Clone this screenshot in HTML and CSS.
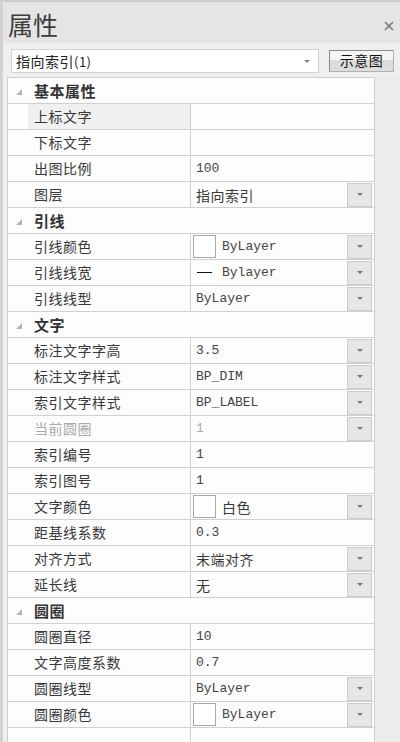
FILE: index.html
```html
<!DOCTYPE html>
<html lang="zh">
<head>
<meta charset="utf-8">
<title>属性</title>
<link rel="stylesheet" href="styles.css">
</head>
<body>
<div class="panel">
  <div class="titlebar">
    <span class="title">属性</span>
    <svg class="close" width="10" height="10" viewBox="0 0 10 10"><path d="M1 1L9 9M9 1L1 9" stroke="#777" stroke-width="1.6" fill="none"/></svg>
  </div>
  <div class="toolbar">
    <div class="combo"><span class="combo-text">指向索引<span class="num">(1)</span></span><span class="caret"></span></div>
    <div class="btn">示意图</div>
  </div>
  <div class="gridwrap">
    <div class="grid">
      <div class="row sec"><span class="tri"></span><span class="sec-name">基本属性</span></div>
      <div class="row"><span class="ind"></span><span class="name sel">上标文字</span><span class="val"></span></div>
      <div class="row"><span class="ind"></span><span class="name">下标文字</span><span class="val"></span></div>
      <div class="row"><span class="ind"></span><span class="name">出图比例</span><span class="val"><span class="mono">100</span></span></div>
      <div class="row"><span class="ind"></span><span class="name">图层</span><span class="val"><span class="cjk">指向索引</span><span class="dd"></span></span></div>

      <div class="row sec"><span class="tri"></span><span class="sec-name">引线</span></div>
      <div class="row"><span class="ind"></span><span class="name">引线颜色</span><span class="val sw"><span class="swatch"></span><span class="mono">ByLayer</span><span class="dd"></span></span></div>
      <div class="row"><span class="ind"></span><span class="name">引线线宽</span><span class="val sw"><span class="lw"><span class="lw-line"></span></span><span class="mono">Bylayer</span><span class="dd"></span></span></div>
      <div class="row"><span class="ind"></span><span class="name">引线线型</span><span class="val"><span class="mono">ByLayer</span><span class="dd"></span></span></div>

      <div class="row sec"><span class="tri"></span><span class="sec-name">文字</span></div>
      <div class="row"><span class="ind"></span><span class="name">标注文字字高</span><span class="val"><span class="mono">3.5</span><span class="dd"></span></span></div>
      <div class="row"><span class="ind"></span><span class="name">标注文字样式</span><span class="val"><span class="mono">BP_DIM</span><span class="dd"></span></span></div>
      <div class="row"><span class="ind"></span><span class="name">索引文字样式</span><span class="val"><span class="mono">BP_LABEL</span><span class="dd"></span></span></div>
      <div class="row dis"><span class="ind"></span><span class="name">当前圆圈</span><span class="val"><span class="mono">1</span><span class="dd"></span></span></div>
      <div class="row"><span class="ind"></span><span class="name">索引编号</span><span class="val"><span class="mono">1</span></span></div>
      <div class="row"><span class="ind"></span><span class="name">索引图号</span><span class="val"><span class="mono">1</span></span></div>
      <div class="row"><span class="ind"></span><span class="name">文字颜色</span><span class="val sw"><span class="swatch"></span><span class="cjk">白色</span><span class="dd"></span></span></div>
      <div class="row"><span class="ind"></span><span class="name">距基线系数</span><span class="val"><span class="mono">0.3</span></span></div>
      <div class="row"><span class="ind"></span><span class="name">对齐方式</span><span class="val"><span class="cjk">末端对齐</span><span class="dd"></span></span></div>
      <div class="row"><span class="ind"></span><span class="name">延长线</span><span class="val"><span class="cjk">无</span><span class="dd"></span></span></div>

      <div class="row sec"><span class="tri"></span><span class="sec-name">圆圈</span></div>
      <div class="row"><span class="ind"></span><span class="name">圆圈直径</span><span class="val"><span class="mono">10</span></span></div>
      <div class="row"><span class="ind"></span><span class="name">文字高度系数</span><span class="val"><span class="mono">0.7</span></span></div>
      <div class="row"><span class="ind"></span><span class="name">圆圈线型</span><span class="val"><span class="mono">ByLayer</span><span class="dd"></span></span></div>
      <div class="row"><span class="ind"></span><span class="name">圆圈颜色</span><span class="val sw"><span class="swatch"></span><span class="mono">ByLayer</span><span class="dd"></span></span></div>
      <div class="row last"><span class="ind"></span><span class="name"></span><span class="val"></span></div>
    </div>
    <div class="scroll"></div>
  </div>
</div>
</body>
</html>
```

FILE: styles.css
```css
* { box-sizing: border-box; }
html, body { margin: 0; padding: 0; }
body {
  width: 400px;
  height: 742px;
  overflow: hidden;
  background: #ececec;
  font-family: "Noto Sans CJK SC", "Noto Sans", sans-serif;
  color: #333;
}
.panel {
  width: 400px;
  height: 742px;
  border-left: 3px solid #d2d2d2;
  border-top: 2px solid #cdcdcd;
  display: flex;
  flex-direction: column;
  background: #efefef;
}
.titlebar {
  height: 41px;
  background: #e5e5e5;
  display: flex;
  align-items: center;
  justify-content: space-between;
  padding: 0 6px 0 5px;
}
.title {
  font-size: 25px;
  line-height: 30px;
  color: #3c3c3c;
  margin-top: 2px;
}
.close { margin-top: 6px; }
.toolbar {
  height: 34px;
  display: flex;
  align-items: flex-start;
  padding-top: 6px;
  padding-left: 8px;
  background: #efefef;
}
.combo {
  width: 308px;
  height: 24px;
  background: #fff;
  border: 1px solid #d2d2d2;
  display: flex;
  align-items: center;
  justify-content: space-between;
  padding: 0 8px 0 4px;
}
.combo-text { font-size: 14px; color: #222; letter-spacing: 0.5px; }
.num { font-size: 13px; }
.caret {
  width: 0; height: 0;
  border-left: 3px solid transparent;
  border-right: 3px solid transparent;
  border-top: 3px solid #888;
}
.btn {
  margin-left: 10px;
  margin-top: 1px;
  width: 65px;
  height: 22px;
  border: 1px solid #8a8a8a;
  border-right-color: #b0b0b0;
  border-bottom-color: #b0b0b0;
  background: linear-gradient(#f4f4f4 0%, #f4f4f4 45%, #dcdcdc 46%, #dcdcdc 100%);
  font-size: 14px;
  line-height: 19px;
  text-align: center;
  color: #111;
  letter-spacing: 0.5px;
}
.gridwrap {
  flex: 1;
  display: flex;
  padding-left: 4px;
  min-height: 0;
}
.grid {
  width: 368px;
  border: 1px solid #d0d0d0;
  border-bottom: none;
  background: #fdfdfd;
  overflow: hidden;
}
.scroll { flex: 1; background: #ececec; }
.row {
  display: flex;
  height: 26px;
  border-bottom: 1px solid #d0d0d0;
  font-size: 14px;
  letter-spacing: 0.5px;
}
.row.last { border-bottom: none; }
.sec { align-items: center; }
.tri {
  width: 0; height: 0;
  margin-left: 8px;
  margin-right: 12px;
  margin-top: 3px;
  border-left: 6px solid transparent;
  border-bottom: 6px solid #b4b4b4;
}
.sec-name { font-weight: bold; font-size: 15px; color: #333; letter-spacing: 0.5px; }
.ind { width: 20px; flex: none; }
.name {
  width: 163px;
  flex: none;
  border-right: 1px solid #d0d0d0;
  padding-left: 6px;
  line-height: 25px;
  color: #383838;
}
.name.sel { background: #f0f0f0; }
.val {
  flex: 1;
  display: flex;
  align-items: center;
  padding-left: 5px;
}
.val.sw { padding-left: 2px; }
.mono {
  font-family: "Liberation Mono", "DejaVu Sans Mono", monospace;
  font-size: 13px;
  letter-spacing: 0;
  color: #444;
}
.cjk { color: #383838; }
.dis .name, .dis .mono { color: #aaa; }
.swatch {
  width: 23px;
  height: 23px;
  border: 1px solid #a8a8a8;
  background: #fff;
  margin-right: 6px;
  flex: none;
}
.lw {
  width: 23px;
  height: 23px;
  background: #fff;
  margin-right: 6px;
  display: flex;
  align-items: center;
  justify-content: center;
  flex: none;
}
.lw-line { width: 15px; height: 1.5px; background: #111; }
.dd {
  margin-left: auto;
  margin-right: 2px;
  width: 25px;
  height: 24px;
  background: #e6e6e6;
  border: 1px solid #cbcbcb;
  display: flex;
  align-items: center;
  justify-content: center;
}
.dd::after {
  content: "";
  width: 0; height: 0;
  border-left: 3px solid transparent;
  border-right: 3px solid transparent;
  border-top: 3px solid #777;
}
```
